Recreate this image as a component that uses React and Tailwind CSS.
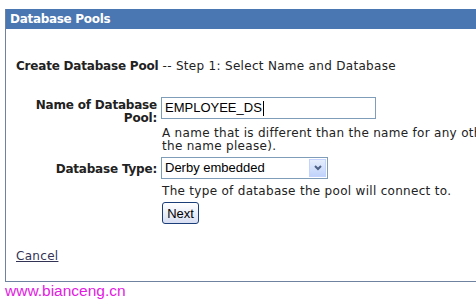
export default function App() {
  const v = { fontFamily: '"DejaVu Sans", Verdana, sans-serif' };
  const a = { fontFamily: '"Liberation Sans", Arial, sans-serif' };
  return (
    <div className="w-[476px] h-[305px] bg-white overflow-hidden relative" style={v}>
      <div className="pt-[9px] pl-[5px]">
        <div className="border-l border-b border-[#6f82a0] h-[273px]">
          <div className="h-[20px] bg-[#4a76b2] text-white font-bold text-[12px] leading-[20px] pl-[4px] tracking-[-0.3px]">
            Database Pools
          </div>
          <div className="pl-[10px] pt-[30px] text-[#222] text-[12px] tracking-[0.3px]">
            <div className="leading-[14px]">
              <span className="font-bold tracking-[-0.2px]">Create Database Pool</span> -- Step 1: Select Name and Database
            </div>
            <div className="mt-[24px] grid grid-cols-[141px_1fr] gap-x-[4px] whitespace-nowrap">
              <div className="font-bold text-right whitespace-normal leading-[13px] pt-[2px] tracking-[-0.2px]">Name of Database Pool:</div>
              <div>
                <div className="w-[215px] h-[22px] border border-[#7f9db9] flex items-center pl-[3px] text-[13px] text-black tracking-normal" style={a}>
                  EMPLOYEE_DS<span className="inline-block w-px h-[15px] bg-black ml-px" />
                </div>
                <div className="pl-px pt-[8px] leading-[13px] text-[12px]">
                  A name that is different than the name for any other database pool (change
                  <br />
                  the name please).
                </div>
              </div>
              <div className="font-bold text-right pt-[7px] tracking-[-0.2px]">Database Type:</div>
              <div className="pt-[4px]">
                <div className="w-[167px] h-[22px] border border-[#7f9db9] flex items-stretch text-[13px] text-black tracking-normal" style={a}>
                  <div className="flex-1 pl-[3px] flex items-center">Derby embedded</div>
                  <div className="w-[17px] m-px border border-[#c3d3fd] bg-gradient-to-b from-[#e6eefc] to-[#c1d3fb] flex items-center justify-center">
                    <svg width="8" height="6" viewBox="0 0 8 6"><path d="M1 1 L4 4 L7 1" fill="none" stroke="#4d6185" strokeWidth="2" /></svg>
                  </div>
                </div>
                <div className="pl-px pt-[5px] leading-[14px]">The type of database the pool will connect to.</div>
                <div className="pl-px pt-[4px]">
                  <button className="w-[37px] h-[22px] rounded-[3px] border border-[#1c3e78] bg-gradient-to-b from-white to-[#d8dff2] text-[13px] text-black leading-none tracking-normal" style={a}>Next</button>
                </div>
              </div>
            </div>
            <div className="mt-[23px]">
              <span className="underline text-[#333355] text-[12px]">Cancel</span>
            </div>
          </div>
        </div>
      </div>
      <div className="absolute left-[5px] top-[281px] text-[15.5px] text-[#e21ae2] leading-[20px]" style={a}>www.bianceng.cn</div>
    </div>
  );
}
